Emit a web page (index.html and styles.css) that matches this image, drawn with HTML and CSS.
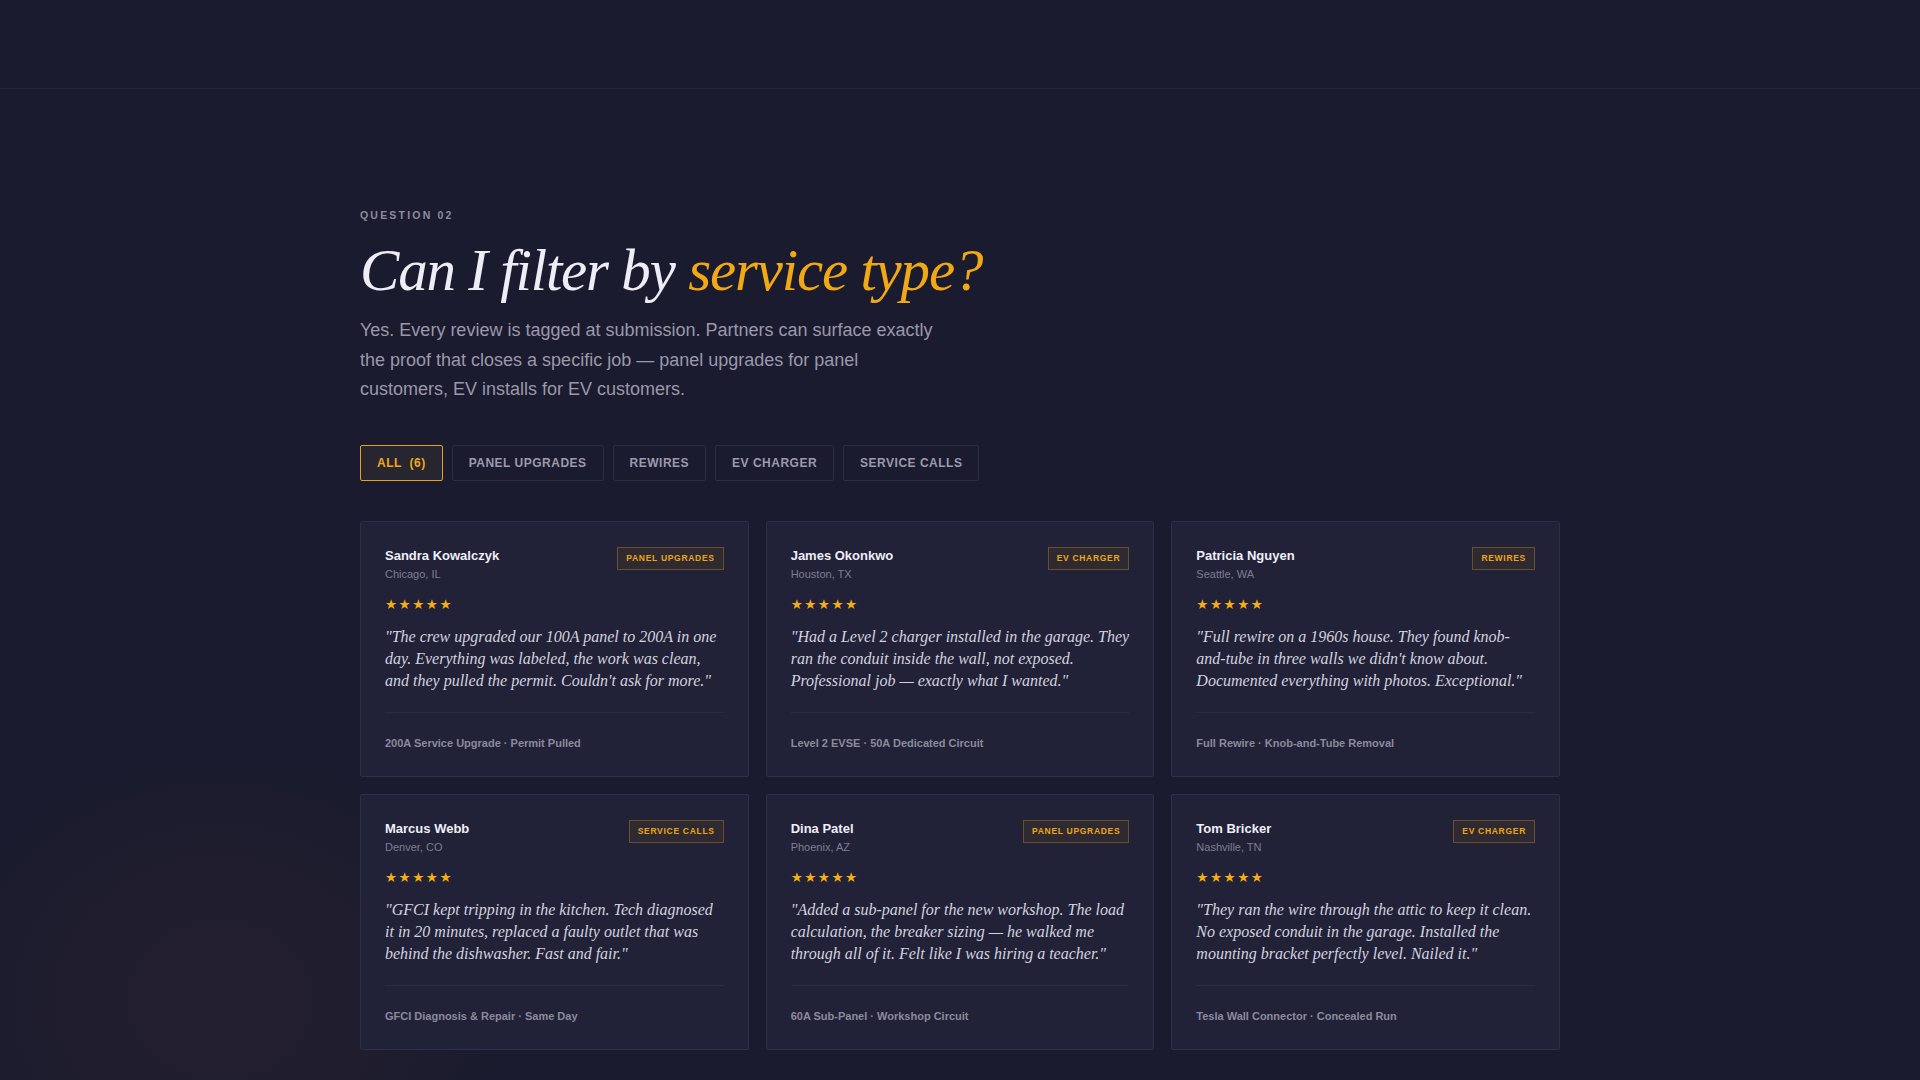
FILE: index.html
```html
<!DOCTYPE html>
<html lang="en">
<head>
<meta charset="utf-8">
<title>Can I filter by service type?</title>
<link rel="stylesheet" href="styles.css">
</head>
<body>
<header class="topbar"></header>
<main class="section">
  <div class="eyebrow">QUESTION 02</div>
  <h1 class="title">Can I filter by <span class="accent">service type?</span></h1>
  <p class="lead">Yes. Every review is tagged at submission. Partners can surface exactly the proof that closes a specific job — panel upgrades for panel customers, EV installs for EV customers.</p>

  <div class="filters">
    <button class="filter active">ALL&nbsp;&nbsp;(6)</button>
    <button class="filter">PANEL UPGRADES</button>
    <button class="filter">REWIRES</button>
    <button class="filter">EV CHARGER</button>
    <button class="filter">SERVICE CALLS</button>
  </div>

  <div class="grid">
    <article class="card">
      <div class="card-head">
        <div><div class="name">Sandra Kowalczyk</div><div class="loc">Chicago, IL</div></div>
        <span class="tag">PANEL UPGRADES</span>
      </div>
      <div class="stars">★★★★★</div>
      <p class="quote">"The crew upgraded our 100A panel to 200A in one day. Everything was labeled, the work was clean, and they pulled the permit. Couldn't ask for more."</p>
      <div class="meta">200A Service Upgrade · Permit Pulled</div>
    </article>
    <article class="card">
      <div class="card-head">
        <div><div class="name">James Okonkwo</div><div class="loc">Houston, TX</div></div>
        <span class="tag">EV CHARGER</span>
      </div>
      <div class="stars">★★★★★</div>
      <p class="quote">"Had a Level 2 charger installed in the garage. They ran the conduit inside the wall, not exposed. Professional job — exactly what I wanted."</p>
      <div class="meta">Level 2 EVSE · 50A Dedicated Circuit</div>
    </article>
    <article class="card">
      <div class="card-head">
        <div><div class="name">Patricia Nguyen</div><div class="loc">Seattle, WA</div></div>
        <span class="tag">REWIRES</span>
      </div>
      <div class="stars">★★★★★</div>
      <p class="quote">"Full rewire on a 1960s house. They found knob-and-tube in three walls we didn't know about. Documented everything with photos. Exceptional."</p>
      <div class="meta">Full Rewire · Knob-and-Tube Removal</div>
    </article>
    <article class="card">
      <div class="card-head">
        <div><div class="name">Marcus Webb</div><div class="loc">Denver, CO</div></div>
        <span class="tag">SERVICE CALLS</span>
      </div>
      <div class="stars">★★★★★</div>
      <p class="quote">"GFCI kept tripping in the kitchen. Tech diagnosed it in 20 minutes, replaced a faulty outlet that was behind the dishwasher. Fast and fair."</p>
      <div class="meta">GFCI Diagnosis &amp; Repair · Same Day</div>
    </article>
    <article class="card">
      <div class="card-head">
        <div><div class="name">Dina Patel</div><div class="loc">Phoenix, AZ</div></div>
        <span class="tag">PANEL UPGRADES</span>
      </div>
      <div class="stars">★★★★★</div>
      <p class="quote">"Added a sub-panel for the new workshop. The load calculation, the breaker sizing — he walked me through all of it. Felt like I was hiring a teacher."</p>
      <div class="meta">60A Sub-Panel · Workshop Circuit</div>
    </article>
    <article class="card">
      <div class="card-head">
        <div><div class="name">Tom Bricker</div><div class="loc">Nashville, TN</div></div>
        <span class="tag">EV CHARGER</span>
      </div>
      <div class="stars">★★★★★</div>
      <p class="quote">"They ran the wire through the attic to keep it clean. No exposed conduit in the garage. Installed the mounting bracket perfectly level. Nailed it."</p>
      <div class="meta">Tesla Wall Connector · Concealed Run</div>
    </article>
  </div>
</main>
</body>
</html>
```

FILE: styles.css
```css
* { box-sizing: border-box; }

html, body {
  margin: 0;
  padding: 0;
}

body {
  min-height: 1080px;
  background-color: #1a1b2e;
  background-image: radial-gradient(ellipse 420px 360px at 220px 1000px, rgba(60, 40, 45, 0.3), rgba(26, 27, 46, 0) 70%);
  font-family: "Liberation Sans", Arial, sans-serif;
  color: #e9e8f2;
  overflow: hidden;
}

.topbar {
  height: 89px;
  border-bottom: 1px solid #26273b;
}

.section {
  width: 1200px;
  margin: 0 auto;
  padding-top: 119px;
}

.eyebrow {
  font-size: 10.5px;
  line-height: 14px;
  font-weight: 700;
  letter-spacing: 2.2px;
  color: #8d8b9e;
}

.title {
  margin: 14px 0 0;
  font-family: "Liberation Serif", "Times New Roman", serif;
  font-style: italic;
  font-weight: 400;
  font-size: 59px;
  line-height: 68px;
  letter-spacing: -1.2px;
  color: #eeedf6;
}

.accent { color: #f0a915; }

.lead {
  margin: 12px 0 0;
  width: 590px;
  font-size: 18px;
  line-height: 29.5px;
  color: #9a98aa;
}

.filters {
  display: flex;
  gap: 9px;
  margin-top: 40px;
}

.filter {
  height: 36px;
  padding: 0 16px;
  background: transparent;
  border: 1px solid #2c2d44;
  border-radius: 2px;
  font-family: "Liberation Sans", Arial, sans-serif;
  font-size: 12px;
  font-weight: 700;
  letter-spacing: 0.5px;
  color: #9c9aac;
}

.filter.active {
  border-color: #e2a220;
  background: #27252f;
  color: #eeaa1a;
}

.grid {
  display: grid;
  grid-template-columns: repeat(3, 1fr);
  gap: 17px 17px;
  margin-top: 40px;
}

.card {
  display: flex;
  flex-direction: column;
  background: #212238;
  border: 1px solid #2d2e47;
  border-radius: 2px;
  padding: 24px 24px 25px;
  height: 256px;
}

.card-head {
  display: flex;
  justify-content: space-between;
  align-items: flex-start;
}

.name {
  font-size: 13px;
  line-height: 20px;
  font-weight: 700;
  color: #efeef7;
}

.loc {
  font-size: 11px;
  line-height: 16px;
  color: #7f7d91;
}

.tag {
  margin-top: 1px;
  height: 23px;
  padding: 0 8px;
  display: inline-flex;
  align-items: center;
  border: 1px solid #665128;
  background: #2f2a31;
  color: #eba616;
  font-size: 8.5px;
  font-weight: 700;
  letter-spacing: 0.7px;
}

.stars {
  margin-top: 14px;
  font-family: "DejaVu Sans", sans-serif;
  font-size: 13.5px;
  line-height: 16px;
  letter-spacing: 1.5px;
  color: #f4ad12;
}

.quote {
  margin: 14px 0 0;
  font-family: "Liberation Serif", "Times New Roman", serif;
  font-style: italic;
  font-size: 16px;
  line-height: 22px;
  color: #d3d2df;
}

.meta {
  margin-top: auto;
  border-top: 1px solid #2a2b42;
  padding-top: 22px;
  font-size: 11px;
  line-height: 16px;
  font-weight: 700;
  color: #8b8a9c;
}
```
